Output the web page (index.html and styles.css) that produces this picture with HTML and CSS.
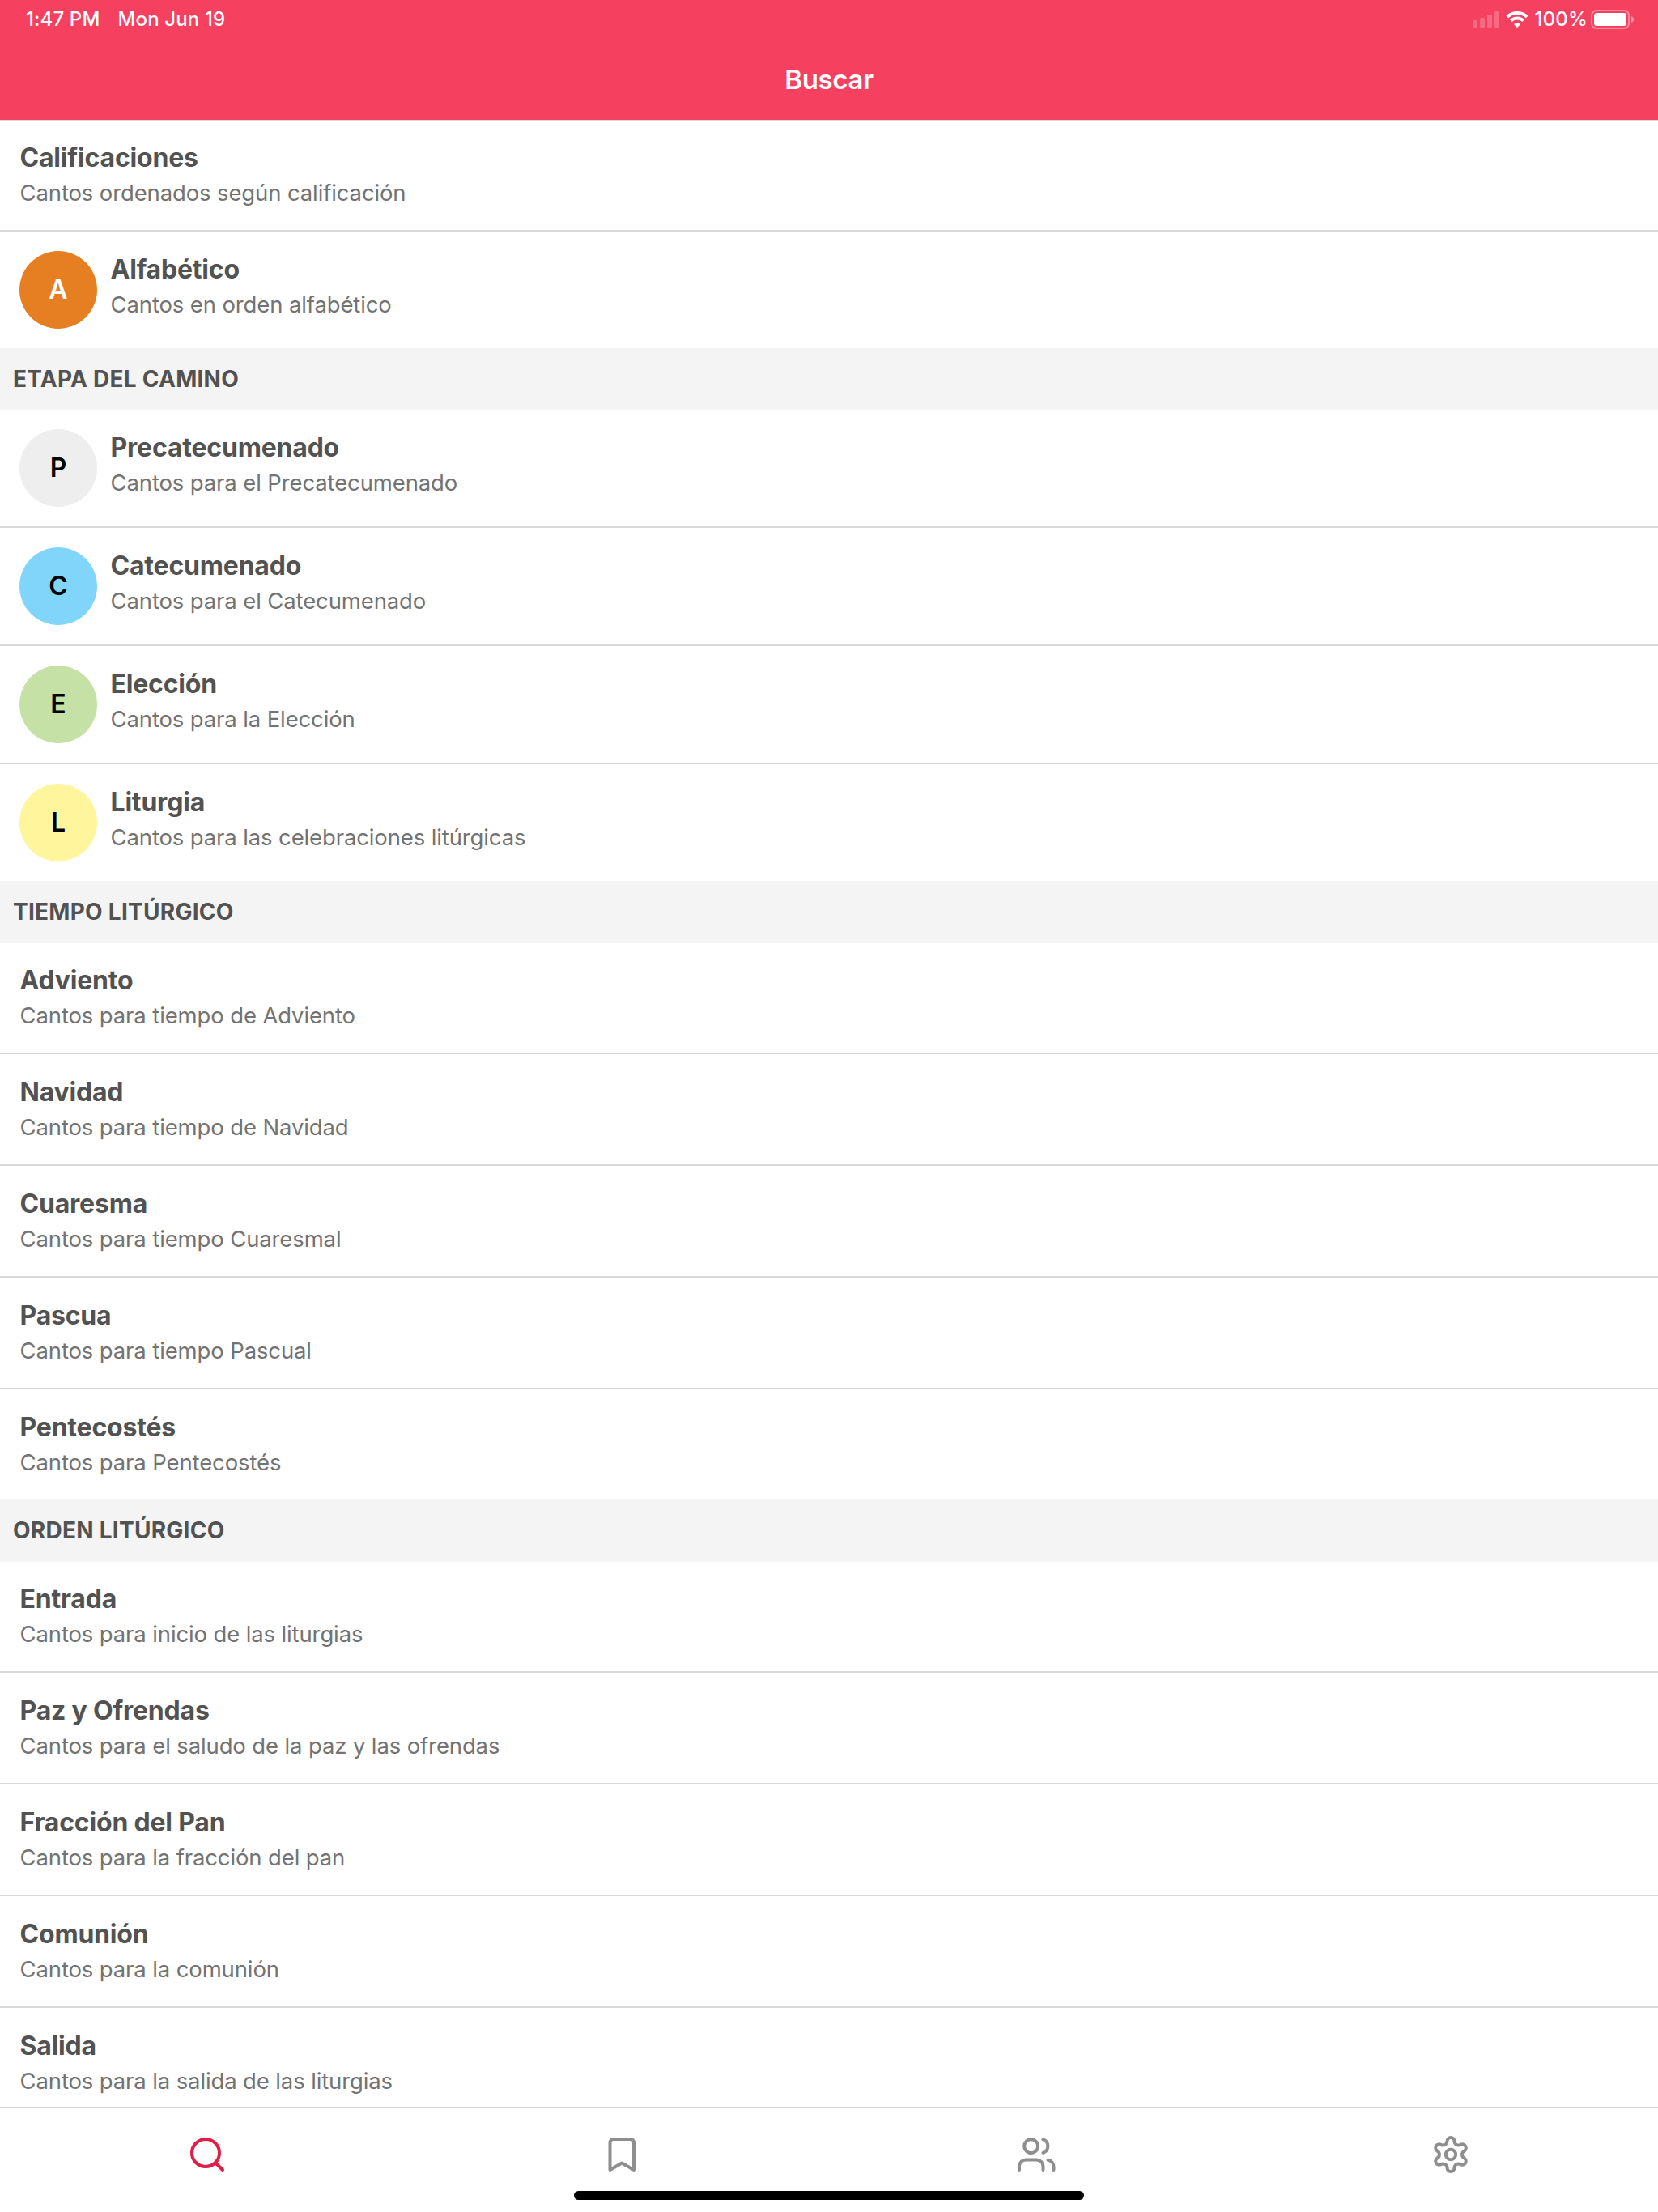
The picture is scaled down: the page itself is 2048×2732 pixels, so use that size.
FILE: index.html
```html
<!DOCTYPE html>
<html lang="es">
<head>
<meta charset="utf-8">
<title>Buscar</title>
<link rel="stylesheet" href="styles.css">
</head>
<body>
<div class="app">
  <header class="header">
    <div class="status">
      <span class="status-time">1:47 PM</span>
      <span class="status-date">Mon Jun 19</span>
      <div class="status-right">
        <svg class="signal" width="33" height="20" viewBox="0 0 33 20"><rect x="0" y="11" width="6" height="9" rx="1.5"/><rect x="9" y="8" width="6" height="12" rx="1.5"/><rect x="18" y="4" width="6" height="16" rx="1.5"/><rect x="27" y="0" width="6" height="20" rx="1.5"/></svg>
        <svg class="wifi" width="28" height="20" viewBox="0 0 28 20"><path d="M1.8 6.9a17.5 17.5 0 0 1 24.4 0M6.4 11.6a11 11 0 0 1 15.2 0"/><path class="wifi-dot" d="M9.8 15.9a6 6 0 0 1 8.4 0L14 20z"/></svg>
        <span class="status-pct">100%</span>
        <svg class="battery" width="53" height="24" viewBox="0 0 53 24"><rect class="battery-shell" x="1" y="1" width="46" height="22" rx="6"/><rect class="battery-fill" x="4" y="4" width="40" height="16" rx="3.5"/><path class="battery-nub" d="M50 8c4 1.500 4 6.500 0 8z"/></svg>
      </div>
    </div>
    <h1 class="header-title">Buscar</h1>
  </header>

  <main class="list">
    <div class="row"><div class="text"><div class="title">Calificaciones</div><div class="sub">Cantos ordenados según calificación</div></div></div>
    <div class="row last"><div class="avatar orange">A</div><div class="text"><div class="title">Alfabético</div><div class="sub">Cantos en orden alfabético</div></div></div>

    <h2 class="section">ETAPA DEL CAMINO</h2>
    <div class="row"><div class="avatar gray">P</div><div class="text"><div class="title">Precatecumenado</div><div class="sub">Cantos para el Precatecumenado</div></div></div>
    <div class="row"><div class="avatar blue">C</div><div class="text"><div class="title">Catecumenado</div><div class="sub">Cantos para el Catecumenado</div></div></div>
    <div class="row"><div class="avatar green">E</div><div class="text"><div class="title">Elección</div><div class="sub">Cantos para la Elección</div></div></div>
    <div class="row last"><div class="avatar yellow">L</div><div class="text"><div class="title">Liturgia</div><div class="sub">Cantos para las celebraciones litúrgicas</div></div></div>

    <h2 class="section">TIEMPO LITÚRGICO</h2>
    <div class="row"><div class="text"><div class="title">Adviento</div><div class="sub">Cantos para tiempo de Adviento</div></div></div>
    <div class="row"><div class="text"><div class="title">Navidad</div><div class="sub">Cantos para tiempo de Navidad</div></div></div>
    <div class="row"><div class="text"><div class="title">Cuaresma</div><div class="sub">Cantos para tiempo Cuaresmal</div></div></div>
    <div class="row"><div class="text"><div class="title">Pascua</div><div class="sub">Cantos para tiempo Pascual</div></div></div>
    <div class="row last"><div class="text"><div class="title">Pentecostés</div><div class="sub">Cantos para Pentecostés</div></div></div>

    <h2 class="section">ORDEN LITÚRGICO</h2>
    <div class="row"><div class="text"><div class="title">Entrada</div><div class="sub">Cantos para inicio de las liturgias</div></div></div>
    <div class="row"><div class="text"><div class="title">Paz y Ofrendas</div><div class="sub">Cantos para el saludo de la paz y las ofrendas</div></div></div>
    <div class="row"><div class="text"><div class="title">Fracción del Pan</div><div class="sub">Cantos para la fracción del pan</div></div></div>
    <div class="row"><div class="text"><div class="title">Comunión</div><div class="sub">Cantos para la comunión</div></div></div>
    <div class="row last"><div class="text"><div class="title">Salida</div><div class="sub">Cantos para la salida de las liturgias</div></div></div>
  </main>

  <nav class="tabs">
    <a class="tab active"><svg width="48" height="48" viewBox="0 0 48 48"><circle cx="22" cy="22" r="17"/><path d="M34 34l9 9"/></svg></a>
    <a class="tab"><svg width="48" height="48" viewBox="0 0 48 48"><path d="M13.500 5H35a4 4 0 0 1 4 4V43L24 34.600 9.500 43V9a4 4 0 0 1 4-4z"/></svg></a>
    <a class="tab"><svg width="48" height="48" viewBox="0 0 48 48"><circle cx="17.700" cy="13.700" r="8.500"/><path d="M3 43v-4.500a8 8 0 0 1 8-8h13.500a8 8 0 0 1 8 8V43M32.500 5.300a8.700 8.700 0 0 1 0 16.500M38.500 30.800a8 8 0 0 1 7 8V43"/></svg></a>
    <a class="tab"><svg width="48" height="48" viewBox="-24 -24 48 48"><circle r="6.200"/><path d="M-4.500-16.400A4.500 4.500 0 0 1 4.500-16.400A5 5 0 0 0 11.950-12.100A4.500 4.500 0 0 1 16.450-4.300A5 5 0 0 0 16.450 4.300A4.500 4.500 0 0 1 11.950 12.100A5 5 0 0 0 4.500 16.400A4.500 4.500 0 0 1-4.500 16.400A5 5 0 0 0-11.950 12.100A4.500 4.500 0 0 1-16.450 4.300A5 5 0 0 0-16.450-4.300A4.500 4.500 0 0 1-11.950-12.100A5 5 0 0 0-4.500-16.400z"/></svg></a>
    <div class="home-indicator"></div>
  </nav>
</div>
</body>
</html>
```

FILE: styles.css
```css
* { box-sizing: border-box; }
body { margin: 0; background: #fff; font-family: Inter, "Liberation Sans", sans-serif; }
h1, h2 { margin: 0; }
.app { height: 2732px; display: flex; flex-direction: column; overflow: hidden; }

.header { flex: none; height: 149px; background: #f6405f; color: #fff; border-bottom: 1px solid #d8d8d8; }
.status { height: 48px; padding: 0 30px 0 32px; display: flex; align-items: center; font-size: 24px; font-weight: 500; line-height: 48px; letter-spacing: .15px; }
.status-date { margin-left: 22px; }
.status-right { margin-left: auto; display: flex; align-items: center; }
.signal { margin-right: 8px; fill: rgba(255, 255, 255, .22); }
.wifi { margin-right: 8px; fill: none; stroke: #fff; stroke-width: 4; }
.wifi-dot { fill: #fff; stroke: none; }
.status-pct { margin-right: 4px; }
.battery-shell { fill: none; stroke: rgba(255, 255, 255, .4); stroke-width: 2; }
.battery-fill { fill: #fff; }
.battery-nub { fill: rgba(255, 255, 255, .45); }
.header-title { height: 100px; font-size: 33px; line-height: 101px; font-weight: 600; letter-spacing: -.4px; text-align: center; }

.list { flex: 1; min-height: 0; overflow: hidden; margin-top: -1px; }
.row { display: flex; align-items: flex-start; gap: 16px; padding: 24px; border-bottom: 2px solid #d8d8d8; }
.row.last { border-bottom: 0; }
.text { height: 88px; padding-left: .5px; }
.title { height: 46px; font-size: 32px; line-height: 46px; font-weight: 700; letter-spacing: -.2px; color: #525252; white-space: nowrap; }
.sub { height: 42px; font-size: 27.5px; line-height: 41px; letter-spacing: -.13px; color: #737373; white-space: nowrap; }
.avatar { width: 96px; height: 96px; border-radius: 50%; font-size: 32px; line-height: 96px; font-weight: 600; text-align: center; color: #000; }
.orange { background: #e67e22; color: #fff; }
.gray { background: #eee; }
.blue { background: #81d4fa; }
.green { background: #c5e1a5; }
.yellow { background: #fff59d; }
.section { height: 77px; margin-bottom: -1px; padding-left: 16px; background: #f4f4f4; color: #525252; font-size: 28px; line-height: 76px; font-weight: 700; letter-spacing: .26px; }

.tabs { flex: none; position: relative; height: 130px; padding-top: 34px; border-top: 1px solid #d8d8d8; background: #fff; display: grid; grid-template-columns: repeat(4, 1fr); justify-items: center; align-items: start; }
.tab svg { display: block; fill: none; stroke: #8e8e8f; stroke-width: 4; stroke-linecap: round; stroke-linejoin: round; }
.tab.active svg { stroke: #e11d48; }
.home-indicator { position: absolute; left: 709px; bottom: 15px; width: 630px; height: 11px; border-radius: 6px; background: #000; }
```
